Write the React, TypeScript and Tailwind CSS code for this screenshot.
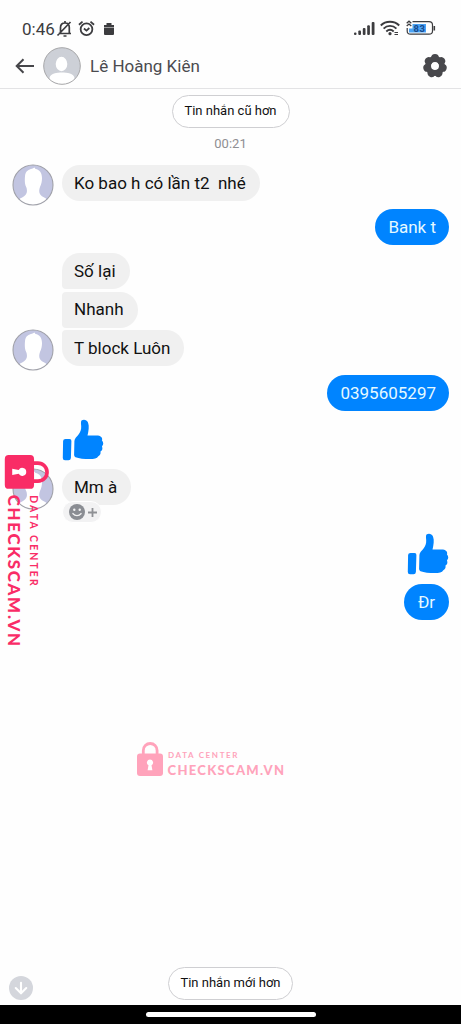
import { ArrowDown } from "lucide-react";
import clsx from "clsx";

type BubbleProps = {
  text: string;
  mine?: boolean;
  position?: "single" | "first" | "middle" | "last";
};

const GEAR_TEETH = [0, 1, 2, 3, 4, 5, 6];

function Bubble({ text, mine, position = "single" }: BubbleProps) {
  return (
    <div
      className={clsx(
        "flex h-9 w-fit items-center whitespace-pre rounded-[18px] text-[17px] leading-none",
        mine
          ? "min-w-[45px] justify-center bg-[#0084ff] px-[13px] text-[#e6f9ff]"
          : "bg-[#f0f0f0] pl-3 pr-[14px] text-[#111]",
        position === "first" && "rounded-bl-[4px]",
        position === "middle" && "rounded-l-[4px]",
        position === "last" && "rounded-tl-[4px]"
      )}
    >
      {text}
    </div>
  );
}

function Avatar() {
  return (
    <svg viewBox="0 0 42 42" className="h-[42px] w-[42px] shrink-0">
      <defs>
        <clipPath id="avatar-clip">
          <circle cx="21" cy="21" r="20" />
        </clipPath>
      </defs>
      <circle cx="21" cy="21" r="20" fill="#c2c5e1" />
      <path
        clipPath="url(#avatar-clip)"
        d="M13 12C13.500 7 17 5.300 20 4.800L22.500 3.500L23.500 5C27.500 5.500 30 9 30 14C30 17 29.500 20 28 23C27.200 25 27 27 27.500 29C28.300 31.500 31 33 34 34.500V42H8V34.500C11 33.500 13.800 31.500 14.600 29C15.200 27 15 25 14.200 23C12.500 20 12.700 16 13 12Z"
        fill="#fff"
      />
      <circle cx="21" cy="21" r="20" fill="none" stroke="#a0a1a9" strokeWidth="1.100" />
    </svg>
  );
}

function Like() {
  return (
    <svg viewBox="0 0 42 42" className="block h-[42px] w-[42px]" fill="#0084ff">
      <path d="M3.500 20H7.500Q9.600 20 9.400 22L8.900 39Q8.700 41.300 6.500 41.300H3Q.8 41.300 .8 39L1.100 22Q1.200 20 3.500 20Z" />
      <path d="M19.500 1.500C21.500 .2 24.700 .5 26 3.500C27.500 7.500 26.500 12 25.500 16.500H34.500C38.500 16.500 41 18.500 40 21.500C41.800 23.500 41.500 26 40 27.200C41 30 40 31.700 38.500 32.500C39 35 37.800 36.500 36.300 37.200C35 39.500 32 40 28 40C22 40 17 39.500 13.500 38.200Q12.100 37.500 12.100 36L12.400 22C12.700 19.500 14.500 18 16 16.300C18.500 13 19.400 10.500 19.200 7C19 4.500 18.700 2.500 19.500 1.500Z" />
    </svg>
  );
}

function LogoMark({ color, textShift = 0 }: { color: string; textShift?: number }) {
  return (
    <>
      <path d="M6.300 15V8.500a6.900 7 0 0 1 13.800 0V15" fill="none" stroke={color} strokeWidth="2.800" />
      <rect x="0" y="11.500" width="26" height="22.500" rx="3" fill={color} />
      <path d="M13 17.500a3.100 3.100 0 0 1 1.500 5.800l.9 5h-4.800l.9-5a3.100 3.100 0 0 1 1.500-5.800Z" fill="#fff" />
      <g transform={`translate(0 ${textShift})`} fill={color}>
        <text x="31" y="15.800" textLength="69.500" fontSize="8" fontWeight="700">DATA CENTER</text>
        <text x="30.500" y="32.500" textLength="116.500" fontSize="13" fontWeight="900">CHECKSCAM.VN</text>
      </g>
    </>
  );
}

function StatusBar() {
  return (
    <div className="flex h-[44px] items-start justify-between pl-[22px] pr-[25px] pt-[19px] text-[#3c3c3f]">
      <div className="flex h-5 items-center">
        <span className="w-[34px] text-[17px] leading-5">0:46</span>
        <svg viewBox="0 0 18 18" className="h-[18px] w-[18px]" fill="none" stroke="currentColor" strokeWidth="1.700">
          <path d="M2.500 13.500H15M4.500 13V7.500C4.500 4.500 6.300 3 9 3s4.300 1.500 4.300 4.500V13M9 1v2M7.500 16h3M1.500 15.500 14.500 2" />
        </svg>
        <svg viewBox="0 0 18 18" className="-mt-[2px] ml-[4px] h-[17px] w-[17px]" fill="none" stroke="currentColor" strokeWidth="1.900">
          <circle cx="9" cy="9.800" r="6.200" />
          <path d="m1 5 3.800-3.300M17 5l-3.800-3.300M6.300 9 9 11.200 12 8.500" />
        </svg>
        <svg viewBox="0 0 12 14" className="-mt-px ml-[8px] h-[14px] w-[12px]" fill="currentColor">
          <path d="M3.500 1h5v2h-5zM1 3h10v2H1zM1 5.500h10V12q0 1-1 1H2q-1 0-1-1Z" />
        </svg>
      </div>
      <div className="-mt-px flex h-5 items-center">
        <svg viewBox="0 0 21 13" className="h-[13px] w-[21px]" fill="currentColor">
          <rect x="0" y="10.500" width="2.500" height="2.500" rx="1" />
          <rect x="4.300" y="8.500" width="2.700" height="4.500" rx="1" />
          <rect x="8.800" y="6" width="2.700" height="7" rx="1" />
          <rect x="13.200" y="3.200" width="2.700" height="9.800" rx="1" />
          <rect x="17.700" y="0" width="2.800" height="13" rx="1" />
        </svg>
        <svg viewBox="0 0 20 16" className="ml-[5px] h-4 w-5" fill="none" stroke="currentColor" strokeWidth="1.900">
          <path d="M.8 5.500C5.500 .5 14.500 .5 19.200 5.500M3.600 8.600c3.600-3.700 9.200-3.700 12.800 0M6.300 11.500c2.200-2 5.200-2 7.400 0" />
          <circle cx="10" cy="13.700" r="1.600" fill="currentColor" stroke="none" />
          <path d="M14.500 12.500h3.500M14.500 14.500h3.500" strokeWidth="1.100" />
        </svg>
        <svg viewBox="0 0 30 16" className="ml-[6px] h-4 w-[30px]">
          <path d="M6.500 1.700H23Q26.500 1.700 26.500 5V11Q26.500 14.200 23 14.200H4.500Q1.200 14.200 1.200 11V8" fill="none" stroke="#3c3c3f" strokeWidth="1.200" />
          <path d="M6.500 4H20V12.500H3V8.500H6.500Z" fill="#4ba3f5" />
          <path d="M28.300 6v4.500" stroke="#3c3c3f" strokeWidth="1.600" />
          <path d="m.7 3.200 2.300-2 2.300 2M.7 6l2.300-2 2.300 2" fill="none" stroke="#3c3c3f" strokeWidth="1.300" />
          <text x="7.500" y="11.600" fontSize="9.500" fontWeight="700" fill="#174a8c" textLength="11.500">83</text>
        </svg>
      </div>
    </div>
  );
}

function Header() {
  return (
    <div className="flex h-[45px] items-center border-b border-[#e3e3e5] pl-[15px] pr-[14px]">
      <svg viewBox="0 0 20 16" className="h-4 w-5" fill="none" stroke="#46464a" strokeWidth="2">
        <path d="M19 8H1.800M8.500 1.200 1.700 8l6.800 6.800" />
      </svg>
      <svg viewBox="0 0 38 38" className="ml-[8px] h-[38px] w-[38px]">
        <defs>
          <clipPath id="header-clip">
            <circle cx="19" cy="19" r="18.300" />
          </clipPath>
        </defs>
        <circle cx="19" cy="19" r="18.300" fill="#cdd0d7" />
        <g fill="#fff" clipPath="url(#header-clip)">
          <ellipse cx="18.500" cy="17" rx="5.800" ry="7.200" />
          <path d="M6.500 38V31C7 26.500 14 25.500 19 25.500S31 26.500 31.500 31V38Z" />
        </g>
        <circle cx="19" cy="19" r="18.300" fill="none" stroke="#a7a7a9" />
      </svg>
      <span className="ml-[9px] pt-[2px] text-[17px] text-[#4b4b4f]">Lê Hoàng Kiên</span>
      <svg viewBox="-12 -12 24 24" className="ml-auto h-6 w-6" fill="#48484c">
        {GEAR_TEETH.map((tooth) => (
          <circle key={tooth} cx="0" cy="-8" r="3.900" transform={`rotate(${(tooth * 360) / 7})`} />
        ))}
        <circle r="7" fill="none" stroke="#48484c" strokeWidth="6" />
      </svg>
    </div>
  );
}

export default function App() {
  return (
    <div className="relative flex h-[1024px] w-[461px] flex-col overflow-hidden bg-[#fefefe] font-[Roboto,'Liberation_Sans',sans-serif]">
      <StatusBar />
      <Header />

      {/* Messages */}
      <div className="flex flex-1 flex-col pl-3 pr-[12px] pt-[6px]">
        <button className="flex h-[33px] w-[118px] items-center justify-center self-center rounded-full border border-[#cfcfd2] bg-white pb-px text-[13px] text-[#111]">
          Tin nhắn cũ hơn
        </button>
        <span className="mt-[7px] self-center text-[13px] leading-[18px] text-[#8f8f92]">00:21</span>

        <div className="mt-[11px] flex gap-[8px]">
          <Avatar />
          <div className="pt-px">
            <Bubble text="Ko bao h có lần t2  nhé" />
          </div>
        </div>
        <div className="mt-[3px] flex justify-end">
          <Bubble text="Bank t" mine />
        </div>

        <div className="mt-[8px] flex items-end gap-[8px]">
          <div className="-mb-[5px]">
            <Avatar />
          </div>
          <div className="flex flex-col gap-[2.500px]">
            <Bubble text="Số lại" position="first" />
            <Bubble text="Nhanh" position="middle" />
            <Bubble text="T block Luôn" position="last" />
          </div>
        </div>
        <div className="mt-[9px] flex justify-end">
          <Bubble text="0395605297" mine />
        </div>

        <div className="ml-[50px] mt-[8px]">
          <Like />
        </div>
        <div className="mt-[7px] flex gap-[8px]">
          <Avatar />
          <div className="flex flex-col pt-px">
            <Bubble text="Mm à" />
            <div className="relative -mt-[4px] flex h-[22px] w-10 items-center gap-[3px] rounded-full border border-white bg-[#f2f2f3] pl-[6px]">
              <svg viewBox="0 0 16 16" className="h-4 w-4 shrink-0">
                <circle cx="8" cy="8" r="8" fill="#8a8d93" />
                <circle cx="5.300" cy="5.800" r="1.200" fill="#f2f2f3" />
                <circle cx="10.700" cy="5.800" r="1.200" fill="#f2f2f3" />
                <path d="M3.500 9.300q4.500 4.800 9 0" fill="none" stroke="#f2f2f3" strokeWidth="1.300" />
              </svg>
              <svg viewBox="0 0 9 9" className="h-[9px] w-[9px] shrink-0" stroke="#8f9195" strokeWidth="1.800">
                <path d="M4.500 0v9M0 4.500h9" />
              </svg>
            </div>
          </div>
        </div>

        <div className="mt-[10px] flex flex-col items-end gap-[9px]">
          <Like />
          <Bubble text="Đr" mine />
        </div>

        {/* Footer controls */}
        <div className="mb-[5px] mt-auto flex items-end justify-center">
          <div className="-ml-[3px] mr-auto flex h-6 w-6 items-center justify-center rounded-full bg-[#d4d6dc]">
            <ArrowDown className="h-[18px] w-[18px] text-white" strokeWidth={2.8} />
          </div>
          <button className="flex h-[33px] w-[125px] items-center justify-center rounded-full border border-[#cfcfd2] bg-white pb-px text-[13px] text-[#111]">
            Tin nhắn mới hơn
          </button>
          <div className="ml-auto w-[21px]" />
        </div>
      </div>

      <div className="flex h-[19px] justify-center bg-black pt-[7px]">
        <div className="h-[5px] w-[170px] rounded-full bg-white" />
      </div>

      {/* Watermarks */}
      <svg
        viewBox="0 0 44 194"
        className="pointer-events-none absolute left-[5px] top-[455px] h-[194px] w-[44px] overflow-visible font-[Lato,sans-serif]"
      >
        <g transform="translate(44 0) rotate(90) scale(1.3)">
          <LogoMark color="#f92c66" textShift={-1.2} />
        </g>
      </svg>
      <svg
        viewBox="0 0 148 34"
        className="pointer-events-none absolute left-[137px] top-[742px] h-[34px] w-[148px] overflow-visible font-[Lato,sans-serif]"
      >
        <LogoMark color="#ffa3bb" />
      </svg>
    </div>
  );
}
